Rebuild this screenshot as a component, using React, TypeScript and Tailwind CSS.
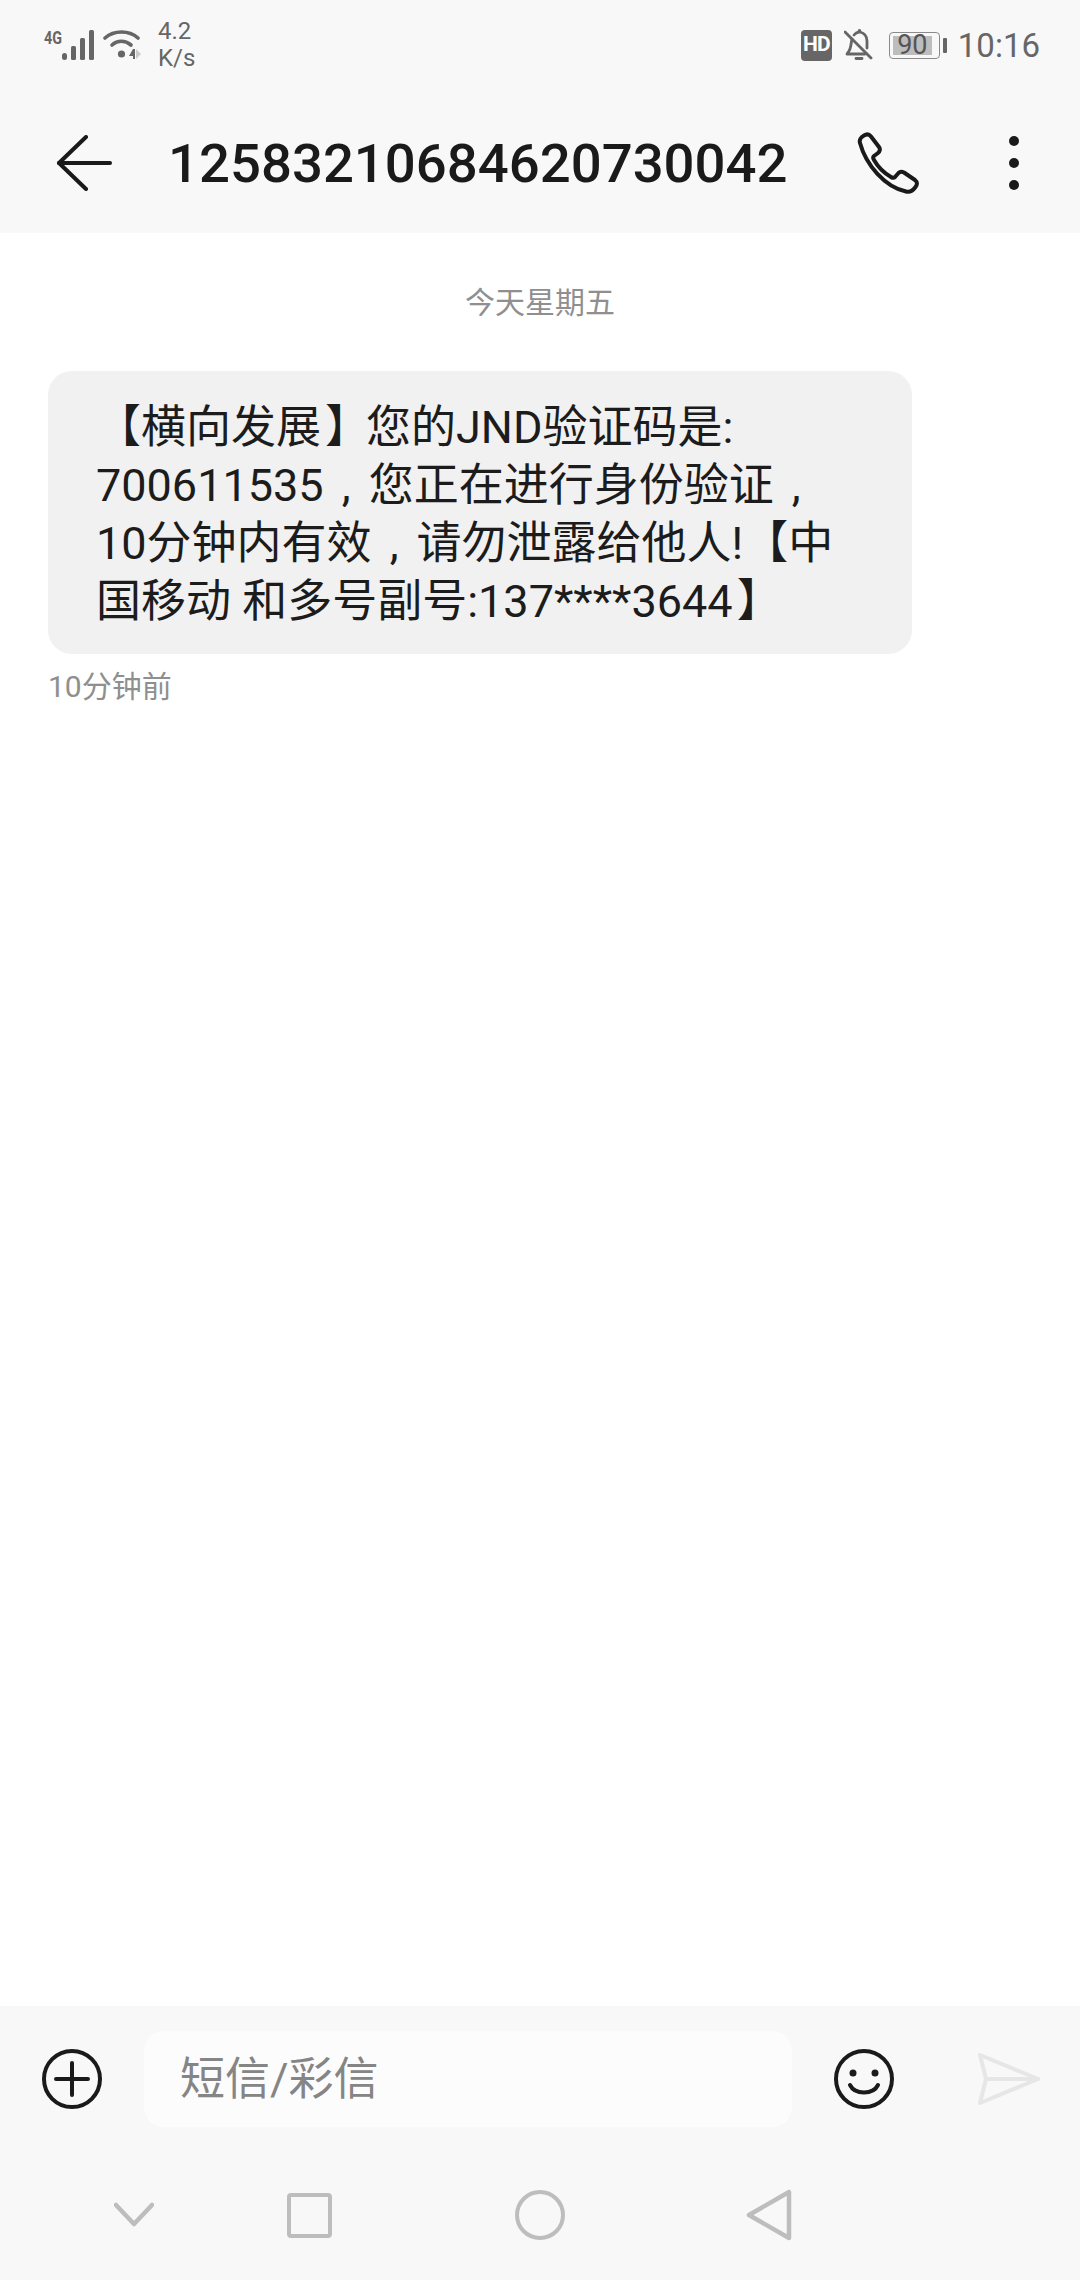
const font = { fontFamily: 'Roboto, "Noto Sans CJK SC", sans-serif' };

function SignalIcon() {
  return (
    <svg className="overflow-visible" width="54" height="32" viewBox="0 0 54 32">
      <text x="0" y="15" fontSize="18" fontWeight="700" fill="#666" fontFamily="Roboto, sans-serif" textLength="18" lengthAdjust="spacingAndGlyphs">4G</text>
      <rect x="18" y="24" width="5" height="7" rx="2.5" fill="#666" />
      <rect x="27" y="17" width="5" height="14" rx="1.5" fill="#666" />
      <rect x="36" y="9" width="5" height="22" rx="1.5" fill="#666" />
      <rect x="45" y="1" width="5" height="30" rx="1.5" fill="#666" />
    </svg>
  );
}

function WifiIcon() {
  return (
    <svg width="38" height="32" viewBox="0 0 38 32" fill="none">
      <path d="M2 9C11 1 26 1 35 9" stroke="#666" strokeWidth="3.6" strokeLinecap="round" />
      <path d="M9 16C14.500 11 22 11 28 16" stroke="#666" strokeWidth="3.6" strokeLinecap="round" />
      <circle cx="18.500" cy="25" r="3.6" fill="#666" />
      <path d="M30 20L26 27H30V30H32V20Z" fill="#666" />
      <path d="M33 20L38 25L33 30Z" fill="#ccc" />
    </svg>
  );
}

function BellOffIcon() {
  return (
    <svg width="30" height="32" viewBox="0 0 30 32" fill="none" stroke="#666" strokeWidth="2.8" strokeLinecap="round" strokeLinejoin="round">
      <path d="M8 10C7 14 7 19 5 22L3 25H21" />
      <path d="M10 6C12 3.500 15 3 15 3C15 3 15 1.500 15.500 1.500C16 1.500 16 3 16 3C20 4 23 7 23 12V19" />
      <path d="M12 29.500H18" />
      <path d="M1 3L27 29" />
    </svg>
  );
}

function BatteryIcon() {
  return (
    <div className="flex items-center gap-[3px]">
      <div className="w-[51px] h-[27px] rounded-[4px] border-[1.5px] border-[#8a8a8a] p-[3px] flex">
        <div className="w-[39px] bg-[#bdbdbd] flex items-center justify-center text-[27px] leading-none text-[#555]">90</div>
      </div>
      <div className="w-[4px] h-[15px] rounded-[1px] bg-[#666]" />
    </div>
  );
}

function StatusBar() {
  return (
    <div className="h-[90px] flex items-center pl-[44px] pr-[40px] text-[#666]">
      <div className="flex items-center gap-[5px]">
        <SignalIcon />
        <WifiIcon />
      </div>
      <div className="ml-[17px] text-[24px] leading-[27px]">
        <div>4.2</div>
        <div>K/s</div>
      </div>
      <div className="flex-1" />
      <div className="w-[31px] h-[31px] rounded-[4px] bg-[#666] text-white text-[21px] font-bold tracking-[-1px] flex items-center justify-center">HD</div>
      <div className="ml-[12px] flex">
        <BellOffIcon />
      </div>
      <div className="ml-[15px]">
        <BatteryIcon />
      </div>
      <div className="ml-[11px] text-[33px] leading-none">10:16</div>
    </div>
  );
}

function Toolbar() {
  return (
    <div className="h-[143px] flex items-center pt-[3px] text-[#1a1a1a]">
      <svg className="ml-[56px]" width="56" height="56" viewBox="0 0 56 56" fill="none" stroke="#1a1a1a" strokeWidth="4" strokeLinecap="round" strokeLinejoin="round">
        <path d="M30 2L3 28L30 54" />
        <path d="M3 28H54" />
      </svg>
      <div className="ml-[56px] text-[54.5px] leading-none font-medium">12583210684620730042</div>
      <svg className="ml-[69px]" width="62" height="62" viewBox="0 0 62 62" fill="none" stroke="#1a1a1a" strokeWidth="4" strokeLinejoin="round">
        <path d="M3 11C2 8 4 5 7 3.500C10 1.500 12 2 14 4.500L22 15C23.500 17 23 19.500 21 21L17 24C16 25 16 26.500 17 28C21 35 27 41 34 45C35.500 46 37 46 38 45L41.500 41C43 39.500 45 39.500 47 40.500L58 48C60.500 50 60.500 52.500 58.500 55C56 58.500 53 60.500 49 59.500C28 55 9 33 3 11Z" />
      </svg>
      <div className="ml-[90px] flex flex-col gap-[12px]">
        <div className="w-[10px] h-[10px] rounded-full bg-[#1a1a1a]" />
        <div className="w-[10px] h-[10px] rounded-full bg-[#1a1a1a]" />
        <div className="w-[10px] h-[10px] rounded-full bg-[#1a1a1a]" />
      </div>
    </div>
  );
}

// the phone draws its full-width comma low in a 45px box, no CJK face does that
function Comma() {
  return <span className="inline-block w-[45px] text-center">,</span>;
}

// closing bracket sits nearer the middle of its box in the reference
function CloseBracket() {
  return <span className="inline-block translate-x-[4px]">】</span>;
}

function Message() {
  return (
    <div className="flex-1 bg-white">
      <div className="pt-[53px] text-center text-[30px] leading-[34px] text-[#8f8f8f]">今天星期五</div>
      <div className="mt-[51px] ml-[48px] w-[864px] rounded-[24px] bg-[#f1f1f1] pl-[48px] pt-[28px] pb-[23px] text-[45px] leading-[58px] text-[#1c1c1c]">
        <div className="whitespace-nowrap">【横向发展<CloseBracket />您的JND验证码是:</div>
        <div className="whitespace-nowrap">700611535<Comma />您正在进行身份验证<Comma /></div>
        <div className="whitespace-nowrap">10分钟内有效<Comma />请勿泄露给他人!【中</div>
        <div className="whitespace-nowrap">国移动 和多号副号:137****3644<CloseBracket /></div>
      </div>
      <div className="mt-[16px] ml-[48px] text-[30px] leading-[34px] text-[#8f8f8f]">10分钟前</div>
    </div>
  );
}

function Composer() {
  return (
    <div className="h-[124px] flex items-center pt-[22px]">
      <svg className="ml-[42px]" width="60" height="60" viewBox="0 0 60 60" fill="none" stroke="#1a1a1a" strokeLinecap="round">
        <circle cx="30" cy="30" r="28" strokeWidth="4" />
        <path d="M30 14V46M14 30H46" strokeWidth="4" />
      </svg>
      <div className="ml-[42px] w-[648px] h-[96px] mt-[-1px] rounded-[20px] bg-[#fcfcfc] flex items-center pl-[36px] pt-[2px] text-[45px] text-[#858585]">短信/彩信</div>
      <svg className="ml-[42px]" width="60" height="60" viewBox="0 0 60 60" fill="none" stroke="#1a1a1a" strokeLinecap="round">
        <circle cx="30" cy="30" r="28" strokeWidth="4" />
        <circle cx="19" cy="24" r="3.500" fill="#1a1a1a" stroke="none" />
        <circle cx="41" cy="24" r="3.500" fill="#1a1a1a" stroke="none" />
        <path d="M16 36C21 46 39 46 44 36" strokeWidth="4" />
      </svg>
      <svg className="ml-[84px]" width="62" height="52" viewBox="0 0 62 52" fill="none" stroke="#e6e6e6" strokeWidth="4" strokeLinecap="round" strokeLinejoin="round">
        <path d="M2 2L60 26L2 50L8 26Z" />
        <path d="M8 26H60" />
      </svg>
    </div>
  );
}

function NavBar() {
  return (
    <div className="flex-1 flex items-center pt-[20px]">
      <svg className="ml-[114px]" width="40" height="26" viewBox="0 0 40 26" fill="none" stroke="#bdbdbd" strokeWidth="4.500" strokeLinecap="round" strokeLinejoin="round">
        <path d="M2 3L20 22L38 3" />
      </svg>
      <div className="ml-[133px] w-[45px] h-[45px] rounded-[4px] border-[4px] border-[#bdbdbd]" />
      <div className="ml-[183px] w-[50px] h-[50px] rounded-full border-[4px] border-[#bdbdbd]" />
      <svg className="ml-[181px]" width="46" height="52" viewBox="0 0 46 52" fill="none" stroke="#bdbdbd" strokeWidth="4.500" strokeLinejoin="round">
        <path d="M43 3V49L3 26Z" />
      </svg>
    </div>
  );
}

export default function App() {
  return (
    <div className="w-[1080px] h-[2280px] flex flex-col bg-[#f8f8f8] overflow-hidden" style={font}>
      <StatusBar />
      <Toolbar />
      <Message />
      <div className="h-[274px] flex flex-col">
        <Composer />
        <NavBar />
      </div>
    </div>
  );
}
